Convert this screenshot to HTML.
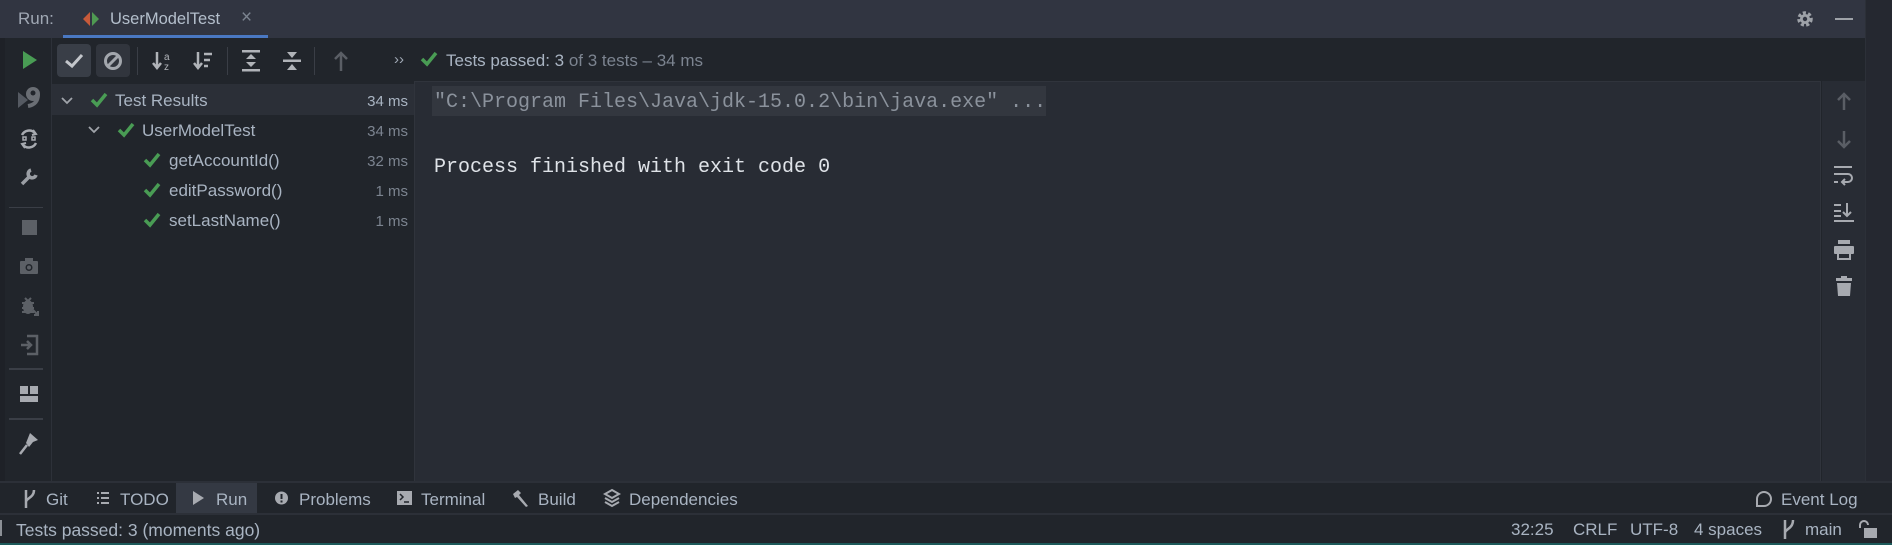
<!DOCTYPE html>
<html><head><meta charset="utf-8"><style>
*{margin:0;padding:0;box-sizing:border-box}
body{width:1892px;height:545px;overflow:hidden;background:#21252b;font-family:"Liberation Sans",sans-serif;color:#a9b4c2;position:relative}
.a{position:absolute}
.t{position:absolute;white-space:nowrap;font-size:17px;line-height:20px}
.g{color:#7c8490}
svg{position:absolute;overflow:visible}
.mono{font-family:"Liberation Mono",monospace;font-size:20px;white-space:pre;position:absolute;line-height:24px}
</style></head><body>
<!-- header -->
<div class="a" style="left:0;top:0;width:1865px;height:38px;background:#313541"></div>
<div class="t" style="left:18px;top:9px;color:#a0a8b4">Run:</div>
<svg style="left:83px;top:12px" width="16" height="14"><path d="M7 0L0 7L7 14Z" fill="#c75a3a"/><path d="M9 0L16 7L9 14Z" fill="#4f9a52"/></svg>
<div class="t" style="left:110px;top:9px;color:#b4bfcc;font-size:16.5px">UserModelTest</div>
<div class="t g" style="left:241px;top:8px;font-size:19px">×</div>
<div class="a" style="left:63px;top:35px;width:205px;height:3px;background:#4a78c2"></div>
<svg style="left:1796px;top:10px" width="18" height="18" viewBox="0 0 18 18"><circle cx="9" cy="9" r="6" fill="none" stroke="#9ea2a8" stroke-width="3.5" stroke-dasharray="3 2.2"/><circle cx="9" cy="9" r="5" fill="#9ea2a8"/><circle cx="9" cy="9" r="2.2" fill="#313541"/></svg>
<div class="a" style="left:1835px;top:18px;width:18px;height:2px;background:#9ea2a8"></div>
<div class="a" style="left:1865px;top:0;width:27px;height:481px;background:#252830;border-left:1px solid #2c3038"></div>
<!-- left strip -->
<div class="a" style="left:0;top:38px;width:5px;height:443px;background:#1e2127"></div>
<div class="a" style="left:51px;top:38px;width:1px;height:443px;background:#2d3139"></div>
<svg style="left:22px;top:51px" width="16" height="18"><path d="M1 0L15 9L1 18Z" fill="#499c54"/></svg>
<svg style="left:18px;top:86px" width="24" height="24"><path d="M0 6L10 14L0 22Z" fill="#555a62"/><circle cx="15" cy="8" r="7" fill="#6a6e74"/><circle cx="15" cy="7" r="2.5" fill="#21252b"/><path d="M20 8C20 16 16 19 10 20" stroke="#6a6e74" stroke-width="4" fill="none"/></svg>
<svg style="left:19px;top:129px" width="20" height="20" fill="none" stroke="#a7aab0" stroke-width="2.5"><path d="M3 6A8 8 0 0 1 16 4M17 14A8 8 0 0 1 4 16"/><path d="M14 1L17 5L13 6" stroke-width="2"/><path d="M6 19L3 15L7 14" stroke-width="2"/><rect x="4" y="8" width="3" height="3" stroke-width="1.5"/><rect x="13" y="8" width="3" height="3" stroke-width="1.5"/></svg>
<svg style="left:20px;top:168px" width="18" height="18"><path d="M2 16L10 8M11 2A4 4 0 1 0 16 7" stroke="#9a9ea4" stroke-width="3.5" fill="none"/></svg>
<div class="a" style="left:9px;top:207px;width:34px;height:1px;background:#3a3e46"></div>
<div class="a" style="left:22px;top:220px;width:15px;height:15px;background:#5c6066"></div>
<svg style="left:20px;top:258px" width="18" height="16"><rect x="0" y="3" width="18" height="13" rx="1" fill="#5c6066"/><rect x="5" y="0" width="8" height="4" fill="#5c6066"/><circle cx="9" cy="9.5" r="3.5" fill="#21252b"/><circle cx="9" cy="9.5" r="2" fill="#5c6066"/></svg>
<svg style="left:20px;top:296px" width="18" height="20"><ellipse cx="8" cy="11" rx="5" ry="7" fill="#5c6066"/><path d="M2 7h12M2 12h12M2 16h12M5 2L8 5L11 2" stroke="#5c6066" stroke-width="2" fill="none"/><path d="M12 13L18 19M14 19h4v-4" stroke="#5c6066" stroke-width="2" fill="none"/></svg>
<svg style="left:20px;top:335px" width="18" height="20" fill="none" stroke="#5c6066" stroke-width="2.5"><path d="M7 1H17V19H7M1 10H11M7 6L11 10L7 14"/></svg>
<div class="a" style="left:9px;top:368px;width:34px;height:2px;background:#3a3e46"></div>
<svg style="left:20px;top:386px" width="18" height="16"><rect x="0" y="0" width="8" height="8" fill="#a7aab0"/><rect x="10" y="0" width="8" height="8" fill="#a7aab0"/><rect x="0" y="10" width="18" height="6" fill="#a7aab0"/></svg>
<div class="a" style="left:9px;top:418px;width:34px;height:2px;background:#3a3e46"></div>
<svg style="left:19px;top:433px" width="20" height="22"><path d="M11 0L19 7L14 9L10 14L7 10Z" fill="#a7aab0"/><path d="M8 12L1 21" stroke="#a7aab0" stroke-width="2.5"/></svg>
<!-- toolbar -->
<div class="a" style="left:57px;top:44px;width:34px;height:33px;background:#393e47;border-radius:4px"></div>
<svg style="left:64px;top:53px" width="20" height="15"><path d="M2 8L8 13L18 2" stroke="#c3c6cb" stroke-width="3" fill="none"/></svg>
<div class="a" style="left:96px;top:44px;width:34px;height:33px;background:#31353d;border-radius:4px"></div>
<svg style="left:103px;top:51px" width="20" height="20" fill="none" stroke="#a3a7ad" stroke-width="3"><circle cx="10" cy="10" r="7.5"/><path d="M5 15L15 5"/></svg>
<div class="a" style="left:137px;top:47px;width:1px;height:28px;background:#3a3e46"></div>
<svg style="left:152px;top:50px" width="20" height="22"><path d="M5 2V18M1 13L5 18L9 13" stroke="#b0b3b8" stroke-width="2.5" fill="none"/><text x="12" y="10" font-size="10" fill="#b0b3b8" font-family="Liberation Sans">a</text><text x="12" y="20" font-size="10" fill="#b0b3b8" font-family="Liberation Sans">z</text></svg>
<svg style="left:193px;top:50px" width="20" height="22"><path d="M5 2V18M1 13L5 18L9 13" stroke="#b0b3b8" stroke-width="2.5" fill="none"/><path d="M11 4h8M11 10h6M11 16h4" stroke="#b0b3b8" stroke-width="2.5"/></svg>
<div class="a" style="left:227px;top:47px;width:1px;height:28px;background:#3a3e46"></div>
<svg style="left:242px;top:50px" width="18" height="22" fill="#b0b3b8"><rect x="0" y="0" width="18" height="2.5"/><rect x="0" y="19" width="18" height="2.5"/><path d="M9 4L14 9H4Z"/><path d="M9 17L14 12H4Z"/></svg>
<svg style="left:283px;top:50px" width="18" height="22" fill="#b0b3b8"><rect x="0" y="9.5" width="18" height="2.5"/><path d="M9 8L14 2H4Z"/><path d="M9 14L14 20H4Z"/></svg>
<div class="a" style="left:314px;top:47px;width:1px;height:28px;background:#3a3e46"></div>
<svg style="left:333px;top:51px" width="16" height="20"><path d="M8 2V20M2 8L8 2L14 8" stroke="#5a5e65" stroke-width="2.5" fill="none"/></svg>
<div class="t" style="left:394px;top:50px;color:#a0a8b4;font-size:15px">››</div>
<svg style="left:420px;top:51px" width="18" height="16"><path d="M2 8L7 13L16 2" stroke="#499c54" stroke-width="3.5" fill="none"/></svg>
<div class="t" style="left:446px;top:51px">Tests passed: 3 <span class="g">of 3 tests – 34 ms</span></div>
<!-- tree -->
<div class="a" style="left:52px;top:84px;width:362px;height:31px;background:#2b2f37"></div>
<div class="a" style="left:414px;top:81px;width:1px;height:400px;background:#30343c"></div>
<svg style="left:61px;top:97px" width="12" height="8"><path d="M1 1L6 6L11 1" stroke="#a0a4aa" stroke-width="1.8" fill="none"/></svg>
<svg style="left:88px;top:126px" width="12" height="8"><path d="M1 1L6 6L11 1" stroke="#a0a4aa" stroke-width="1.8" fill="none"/></svg>
<svg style="left:90px;top:92px" width="18" height="16"><path d="M2 8L7 13L16 2" stroke="#499c54" stroke-width="3.5" fill="none"/></svg>
<svg style="left:117px;top:122px" width="18" height="16"><path d="M2 8L7 13L16 2" stroke="#499c54" stroke-width="3.5" fill="none"/></svg>
<svg style="left:143px;top:152px" width="18" height="16"><path d="M2 8L7 13L16 2" stroke="#499c54" stroke-width="3.5" fill="none"/></svg>
<svg style="left:143px;top:182px" width="18" height="16"><path d="M2 8L7 13L16 2" stroke="#499c54" stroke-width="3.5" fill="none"/></svg>
<svg style="left:143px;top:212px" width="18" height="16"><path d="M2 8L7 13L16 2" stroke="#499c54" stroke-width="3.5" fill="none"/></svg>
<div class="t" style="left:115px;top:91px">Test Results</div>
<div class="t" style="left:142px;top:121px">UserModelTest</div>
<div class="t" style="left:169px;top:151px">getAccountId()</div>
<div class="t" style="left:169px;top:181px">editPassword()</div>
<div class="t" style="left:169px;top:211px">setLastName()</div>
<div class="t" style="left:360px;top:92px;width:48px;text-align:right;font-size:15px;color:#a9b4c2">34 ms</div>
<div class="t g" style="left:360px;top:122px;width:48px;text-align:right;font-size:15px">34 ms</div>
<div class="t g" style="left:360px;top:152px;width:48px;text-align:right;font-size:15px">32 ms</div>
<div class="t g" style="left:360px;top:182px;width:48px;text-align:right;font-size:15px">1 ms</div>
<div class="t g" style="left:360px;top:212px;width:48px;text-align:right;font-size:15px">1 ms</div>
<!-- console -->
<div class="a" style="left:415px;top:81px;width:1406px;height:400px;background:#282c34;border-top:1px solid #30343c;border-right:1px solid #30343c"></div>
<div class="a" style="left:432px;top:86px;width:614px;height:30px;background:#33373f"></div>
<div class="mono" style="left:434px;top:91px;color:#8b929c">"C:\Program Files\Java\jdk-15.0.2\bin\java.exe" ...</div>
<div class="mono" style="left:434px;top:156px;color:#dfe3e8">Process finished with exit code 0</div>
<div class="a" style="left:1822px;top:81px;width:43px;height:400px;background:#282c34"></div>
<svg style="left:1836px;top:92px" width="16" height="18"><path d="M8 2V18M2 8L8 2L14 8" stroke="#5a5e65" stroke-width="2.5" fill="none"/></svg>
<svg style="left:1836px;top:131px" width="16" height="18"><path d="M8 0V16M2 10L8 16L14 10" stroke="#5a5e65" stroke-width="2.5" fill="none"/></svg>
<svg style="left:1834px;top:166px" width="20" height="20" fill="none" stroke="#a7aab0" stroke-width="2"><path d="M0 1H18M0 8H14A4 4 0 0 1 14 16H8M11 13L8 16L11 19M0 16H4"/></svg>
<svg style="left:1834px;top:202px" width="20" height="20" fill="none" stroke="#a7aab0" stroke-width="2"><path d="M0 3H7M0 9H7M0 14H7M0 19H20M13 1V14M9 10L13 14L17 10"/></svg>
<svg style="left:1834px;top:240px" width="20" height="20" fill="#a7aab0"><rect x="4" y="0" width="12" height="4"/><rect x="0" y="6" width="20" height="8" rx="1"/><rect x="4" y="11" width="12" height="8" fill="none" stroke="#a7aab0" stroke-width="2"/></svg>
<svg style="left:1836px;top:276px" width="16" height="20" fill="#a7aab0"><rect x="0" y="2" width="16" height="3"/><rect x="5" y="0" width="6" height="3"/><path d="M1 7H15L14 20H2Z"/></svg>
<!-- bottom bar -->
<div class="a" style="left:0;top:481px;width:1892px;height:2px;background:#2c3038"></div>
<div class="a" style="left:0;top:483px;width:1892px;height:30px;background:#21252b"></div>
<div class="a" style="left:176px;top:483px;width:81px;height:30px;background:#343943"></div>
<svg style="left:24px;top:490px" width="12" height="18" fill="none" stroke="#a7aab0" stroke-width="2.5"><path d="M2 0V18M10 0C10 8 2 8 2 12"/></svg>
<div class="t" style="left:46px;top:490px">Git</div>
<svg style="left:97px;top:492px" width="12" height="13" fill="#a7aab0"><rect y="0" width="2" height="2"/><rect y="5" width="2" height="2"/><rect y="10" width="2" height="2"/><rect x="4" y="0" width="8" height="2"/><rect x="4" y="5" width="8" height="2"/><rect x="4" y="10" width="8" height="2"/></svg>
<div class="t" style="left:120px;top:490px">TODO</div>
<svg style="left:193px;top:491px" width="11" height="14"><path d="M0 0L11 7L0 14Z" fill="#a7aab0"/></svg>
<div class="t" style="left:216px;top:490px">Run</div>
<svg style="left:275px;top:491px" width="13" height="14"><circle cx="6.5" cy="7" r="6.5" fill="#a7aab0"/><rect x="5.5" y="3" width="2" height="5" fill="#21252b"/><rect x="5.5" y="9.5" width="2" height="2" fill="#21252b"/></svg>
<div class="t" style="left:299px;top:490px">Problems</div>
<svg style="left:397px;top:491px" width="15" height="14"><rect width="15" height="14" fill="#a7aab0"/><path d="M3 3L6 6L3 9M7 11H12" stroke="#21252b" stroke-width="1.5" fill="none"/></svg>
<div class="t" style="left:421px;top:490px">Terminal</div>
<svg style="left:512px;top:490px" width="17" height="17"><path d="M1 4L6 0L9 3L7 5L16 16L14 17L5 7L3 8Z" fill="#a7aab0"/></svg>
<div class="t" style="left:538px;top:490px">Build</div>
<svg style="left:604px;top:489px" width="16" height="18" fill="none" stroke="#a7aab0" stroke-width="2"><path d="M8 1L15 5L8 9L1 5Z"/><path d="M1 9L8 13L15 9M1 13L8 17L15 13"/></svg>
<div class="t" style="left:629px;top:490px">Dependencies</div>
<svg style="left:1755px;top:490px" width="18" height="18"><path d="M2 17V9A7 7 0 1 1 9 16H2" stroke="#a7aab0" stroke-width="2" fill="none"/></svg>
<div class="t" style="left:1781px;top:490px">Event Log</div>
<!-- status bar -->
<div class="a" style="left:0;top:513px;width:1892px;height:2px;background:#2c3038"></div>
<div class="a" style="left:0;top:520px;width:2px;height:16px;background:#8c9096"></div>
<div class="t" style="left:16px;top:520px;font-size:17.5px">Tests passed: 3 (moments ago)</div>
<div class="t" style="left:1511px;top:520px">32:25</div>
<div class="t" style="left:1573px;top:520px">CRLF</div>
<div class="t" style="left:1630px;top:520px">UTF-8</div>
<div class="t" style="left:1694px;top:520px">4 spaces</div>
<svg style="left:1782px;top:520px" width="14" height="19" fill="none" stroke="#a7aab0" stroke-width="2.5"><path d="M3 0V19M11 0C11 9 3 9 3 13"/></svg>
<div class="t" style="left:1805px;top:520px">main</div>
<svg style="left:1859px;top:521px" width="18" height="17" fill="#a7aab0"><path d="M1 7V4A4 4 0 0 1 9 4" stroke="#a7aab0" stroke-width="2" fill="none"/><rect x="5" y="7" width="13" height="10"/></svg>
<div class="a" style="left:0;top:543px;width:1892px;height:2px;background:#1d5a5a"></div>
</body></html>
